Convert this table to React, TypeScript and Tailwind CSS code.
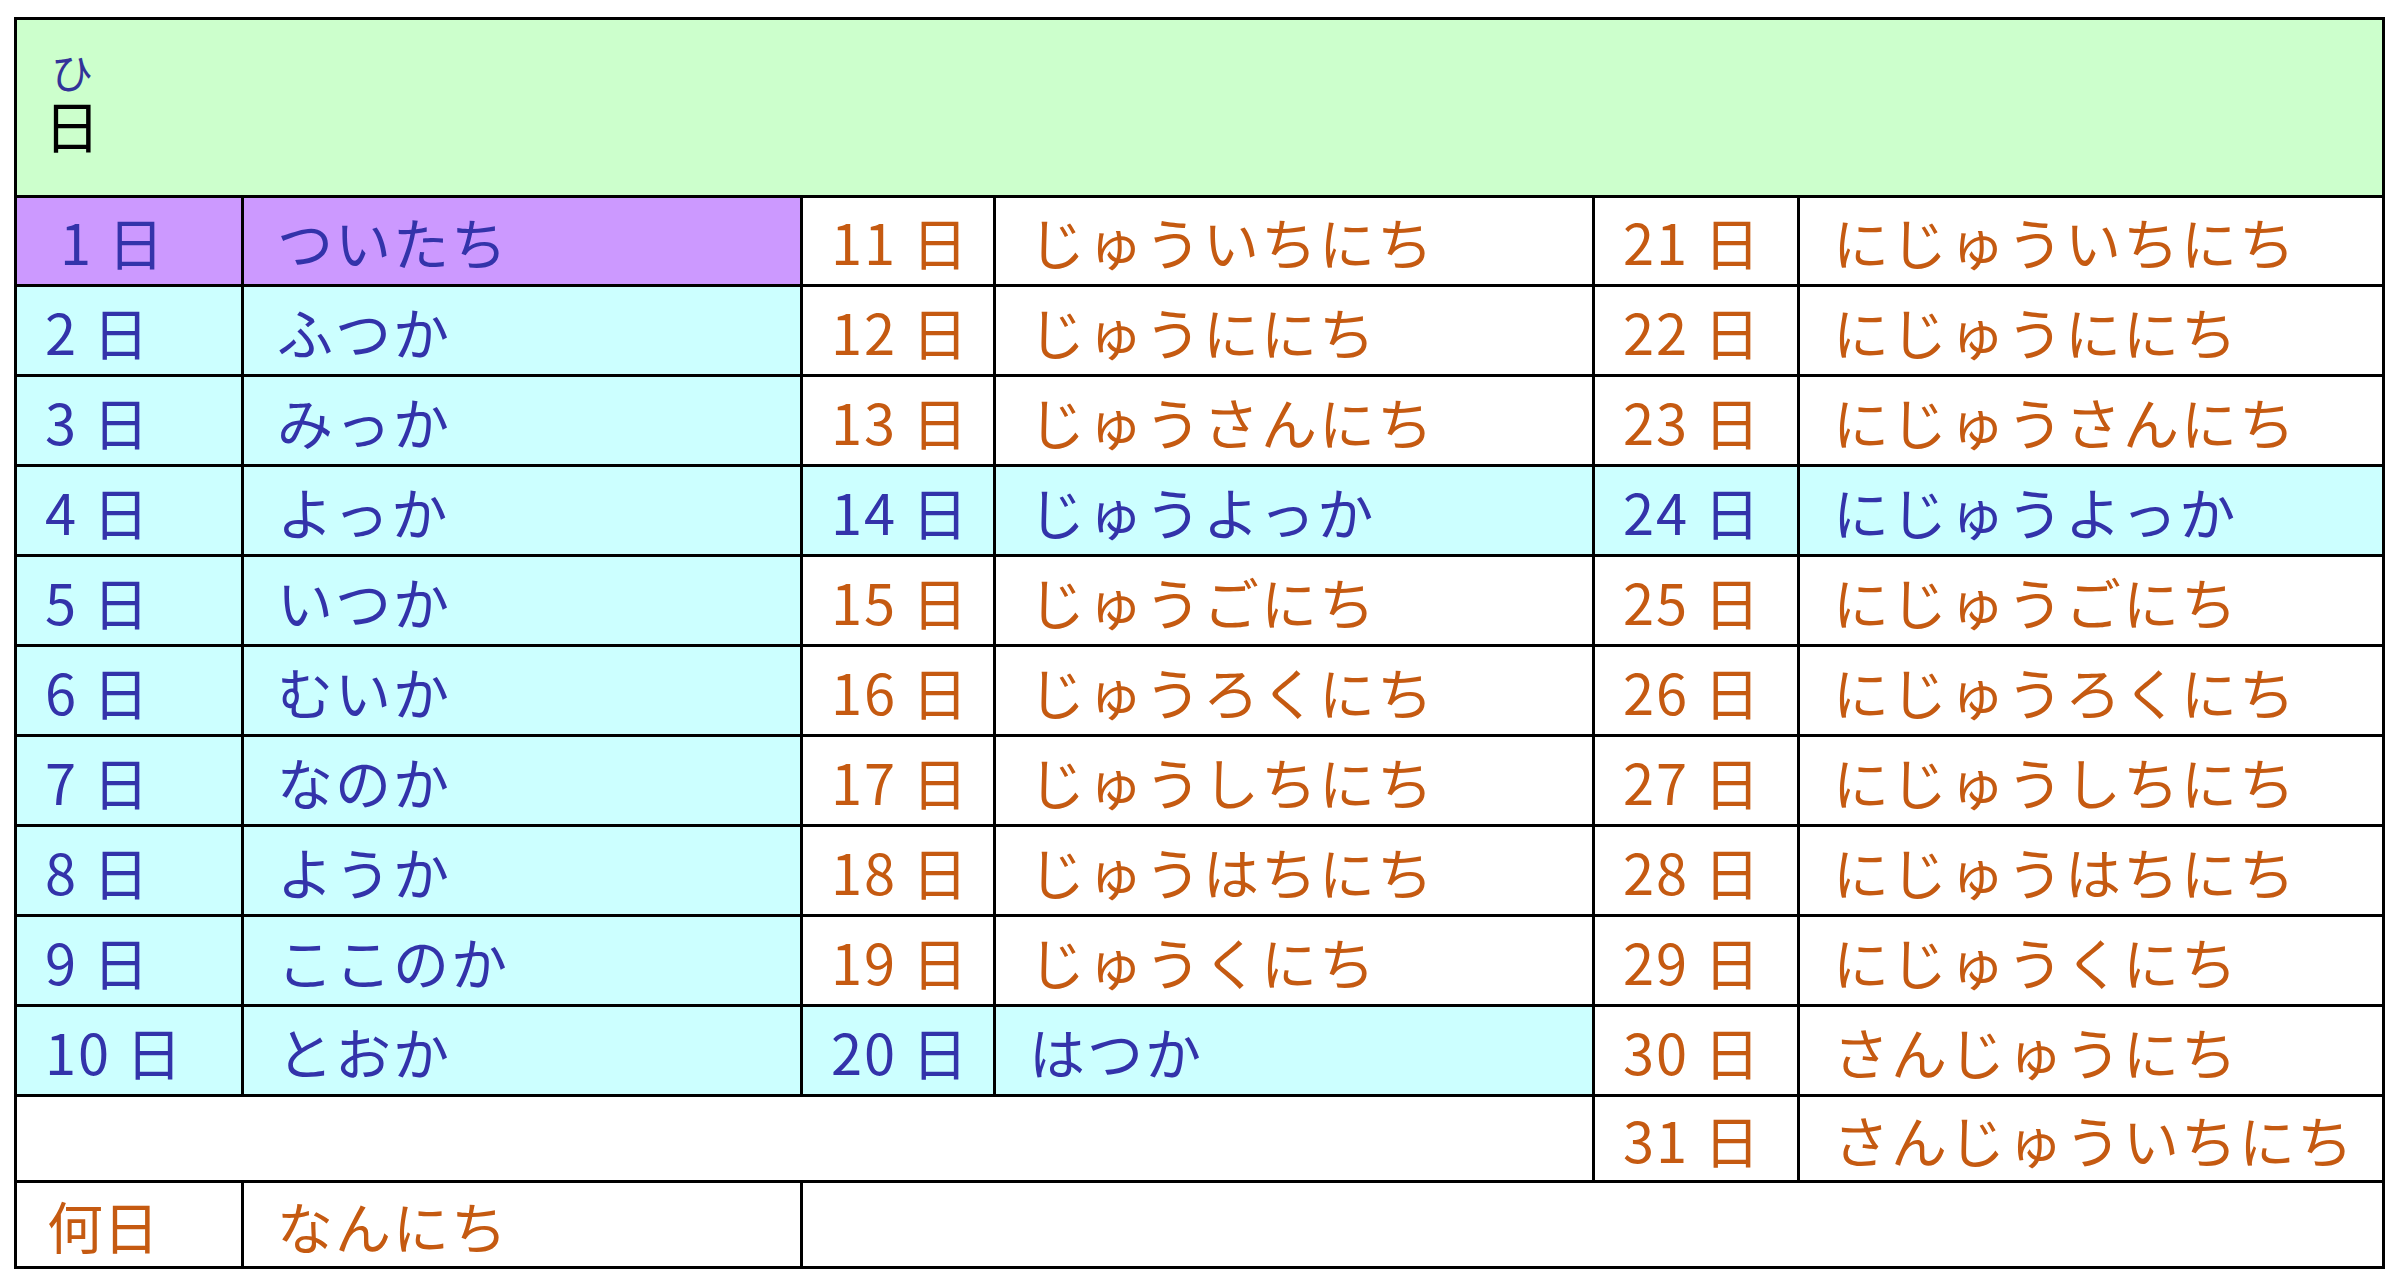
import type { ReactNode } from 'react';

type Tone = 'cyan' | 'purple' | 'white';

const days: { n: number; yomi: string }[] = [
  { n: 1, yomi: 'ついたち' },
  { n: 2, yomi: 'ふつか' },
  { n: 3, yomi: 'みっか' },
  { n: 4, yomi: 'よっか' },
  { n: 5, yomi: 'いつか' },
  { n: 6, yomi: 'むいか' },
  { n: 7, yomi: 'なのか' },
  { n: 8, yomi: 'ようか' },
  { n: 9, yomi: 'ここのか' },
  { n: 10, yomi: 'とおか' },
  { n: 11, yomi: 'じゅういちにち' },
  { n: 12, yomi: 'じゅうににち' },
  { n: 13, yomi: 'じゅうさんにち' },
  { n: 14, yomi: 'じゅうよっか' },
  { n: 15, yomi: 'じゅうごにち' },
  { n: 16, yomi: 'じゅうろくにち' },
  { n: 17, yomi: 'じゅうしちにち' },
  { n: 18, yomi: 'じゅうはちにち' },
  { n: 19, yomi: 'じゅうくにち' },
  { n: 20, yomi: 'はつか' },
  { n: 21, yomi: 'にじゅういちにち' },
  { n: 22, yomi: 'にじゅうににち' },
  { n: 23, yomi: 'にじゅうさんにち' },
  { n: 24, yomi: 'にじゅうよっか' },
  { n: 25, yomi: 'にじゅうごにち' },
  { n: 26, yomi: 'にじゅうろくにち' },
  { n: 27, yomi: 'にじゅうしちにち' },
  { n: 28, yomi: 'にじゅうはちにち' },
  { n: 29, yomi: 'にじゅうくにち' },
  { n: 30, yomi: 'さんじゅうにち' },
  { n: 31, yomi: 'さんじゅういちにち' },
];

// irregular readings get the coloured background
const toneOf = (n: number): Tone => {
  if (n === 1) return 'purple';
  if (n <= 10 || n === 14 || n === 20 || n === 24) return 'cyan';
  return 'white';
};

const bgClass: Record<Tone, string> = {
  cyan: 'bg-[#ccffff] text-[#3333aa]',
  purple: 'bg-[#cc99ff] text-[#3333aa]',
  white: 'bg-white text-[#c55a11]',
};

function Cell({ tone, pad, children, className = '' }: { tone: Tone; pad: string; children?: ReactNode; className?: string }) {
  return (
    <div className={`flex items-center whitespace-nowrap leading-none tracking-[2px] ${bgClass[tone]} ${pad} ${className}`}>
      {children}
    </div>
  );
}

function DayPair({ n, yomi }: { n: number; yomi: string }) {
  const tone = toneOf(n);
  return (
    <>
      <Cell tone={tone} pad={n === 1 ? 'pl-[43px]' : 'pl-[28px]'}>{n} 日</Cell>
      <Cell tone={tone} pad="pl-[33px]">{yomi}</Cell>
    </>
  );
}

export default function App() {
  return (
    <div className="min-h-screen bg-white pt-[17px] pl-[14px]" style={{ fontFamily: '"Noto Sans CJK JP", "Noto Sans", sans-serif' }}>
      <div className="grid w-fit grid-cols-[224px_556px_190px_596px_202px_582px] grid-rows-[175px_86px_repeat(9,87px)_83px_83px] gap-[3px] border-[3px] border-black bg-black text-[56px]">
        <div className="col-span-6 flex items-center bg-[#ccffcc] pb-[13px] pl-[27px]">
          <div className="flex flex-col items-center gap-[4px] leading-none">
            <span className="text-[42px] text-[#333399]">ひ</span>
            <span className="text-black">日</span>
          </div>
        </div>

        {Array.from({ length: 10 }, (_, i) => (
          <div key={i} className="contents">
            <DayPair {...days[i]} />
            <DayPair {...days[i + 10]} />
            <DayPair {...days[i + 20]} />
          </div>
        ))}

        <div className="col-span-4 bg-white" />
        <DayPair {...days[30]} />

        <Cell tone="white" pad="pl-[30px]" className="tracking-normal">何日</Cell>
        <Cell tone="white" pad="pl-[33px]">なんにち</Cell>
        <div className="col-span-4 bg-white" />
      </div>
    </div>
  );
}
